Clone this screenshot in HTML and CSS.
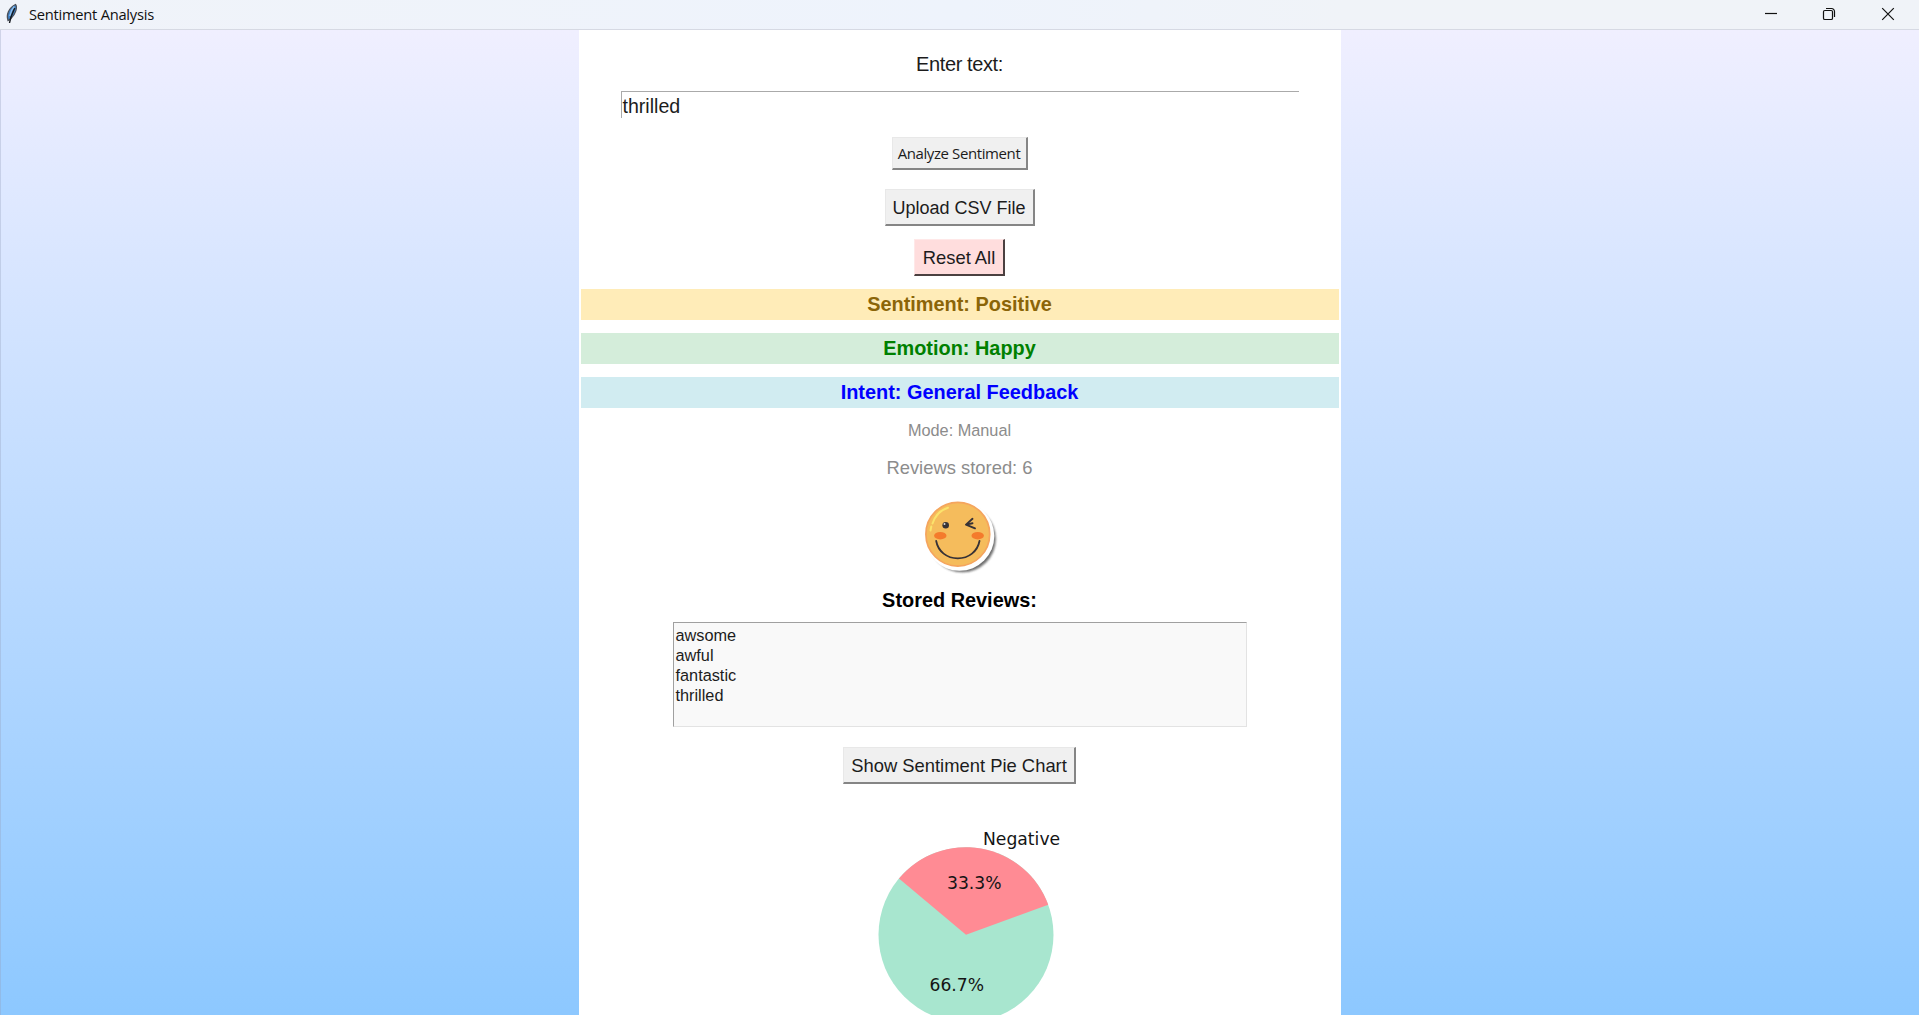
FILE: index.html
```html
<!DOCTYPE html>
<html lang="en">
<head>
<meta charset="utf-8">
<title>Sentiment Analysis</title>
<link rel="stylesheet" href="styles.css">
</head>
<body>
<header class="titlebar">
  <svg class="feather" width="14" height="22" viewBox="0 0 14 22">
    <path d="M3 17.500C1 12 3.500 5 10.500 1.500C12.600 4 11 11 5.500 16Z" fill="#3f7fc4" stroke="#4a4f58" stroke-width="1.200"/>
    <path d="M9.300 3.500C6.500 6.500 5.500 9.500 4.800 13" fill="none" stroke="#8fc0ee" stroke-width="1.500"/>
    <path d="M9.800 5C8 9 5.500 13 4.500 20" fill="none" stroke="#15191e" stroke-width="1.400"/>
  </svg>
  <h1 class="title">Sentiment Analysis</h1>
  <div class="controls">
    <svg width="14" height="14" viewBox="0 0 14 14"><path d="M2 6.500H14"/></svg>
    <svg width="14" height="14" viewBox="0 0 14 14"><rect x="1.500" y="3.500" width="9" height="9" rx="1.300"/><path d="M4 1.500H9.500A3 3 0 0 1 12.500 4.500V10"/></svg>
    <svg width="14" height="14" viewBox="0 0 14 14"><path d="M1.200 1.200L12.800 12.800M12.800 1.200L1.200 12.800"/></svg>
  </div>
</header>
<main class="canvas">
  <section class="panel">
    <label class="prompt" for="entry">Enter text:</label>
    <div class="entry" id="entry">thrilled</div>
    <button class="btn analyze"><span>Analyze Sentiment</span></button>
    <button class="btn upload"><span>Upload CSV File</span></button>
    <button class="btn reset"><span>Reset All</span></button>
    <div class="band sentiment">Sentiment: Positive</div>
    <div class="band emotion">Emotion: Happy</div>
    <div class="band intent">Intent: General Feedback</div>
    <p class="mode">Mode: Manual</p>
    <p class="count">Reviews stored: 6</p>
    <svg class="emoji" width="80" height="80" viewBox="0 0 80 80">
      <defs>
        <filter id="soft" x="-20%" y="-20%" width="140%" height="140%"><feGaussianBlur stdDeviation="1.200"/></filter>
      </defs>
      <circle cx="42.500" cy="43" r="33.300" fill="#555" opacity=".85" filter="url(#soft)"/>
      <circle cx="39.500" cy="40" r="34.800" fill="#fff"/>
      <circle cx="37.800" cy="38.200" r="31.900" fill="#f5bc5c" stroke="#f5a55e" stroke-width="1.700"/>
      <path d="M10.500 34.500L11.300 30.500M12.500 27.500C15 20 20.500 14 28 11.700" fill="none" stroke="#fbe36c" stroke-width="2" stroke-linecap="round"/>
      <circle cx="25.700" cy="29.300" r="3.300" fill="#373236"/>
      <circle cx="24.500" cy="27.900" r="1" fill="#ddd"/>
      <path d="M52.500 22.800L46 28.600L55 32.300M46 28.600L52.500 27.300" fill="none" stroke="#373236" stroke-width="1.900" stroke-linecap="round" stroke-linejoin="round"/>
      <ellipse cx="20.300" cy="39.700" rx="6.200" ry="3.700" fill="#f47b2c"/>
      <ellipse cx="57.700" cy="39.700" rx="6.200" ry="3.700" fill="#f47b2c"/>
      <path d="M16.200 45C18 55.500 27 62.300 37.800 62.300S57.600 55.500 59.500 45" fill="none" stroke="#373236" stroke-width="1.800" stroke-linecap="round"/>
    </svg>
    <h2 class="stored">Stored Reviews:</h2>
    <ul class="list">
      <li>awsome</li>
      <li>awful</li>
      <li>fantastic</li>
      <li>thrilled</li>
    </ul>
    <button class="btn chart"><span>Show Sentiment Pie Chart</span></button>
    <svg class="pie" width="240" height="195" viewBox="0 0 240 195">
      <circle cx="116" cy="114.700" r="87.500" fill="#a8e6cf"/>
      <path d="M116 114.700L198.220 84.770A87.500 87.500 0 0 0 48.970 58.460Z" fill="#ff8b94"/>
      <text x="133" y="25">Negative</text>
      <text x="97" y="69">33.3%</text>
      <text x="79.500" y="171">66.7%</text>
    </svg>
  </section>
</main>
</body>
</html>
```
FILE: styles.css
```css
* {
  box-sizing: border-box;
}

body {
  margin: 0;
  height: 1015px;
  overflow: hidden;
  display: flex;
  flex-direction: column;
  font-family: "Liberation Sans", Arial, sans-serif;
  color: #1c1c1c;
}

.titlebar {
  flex: none;
  height: 30px;
  display: flex;
  align-items: center;
  padding: 0 24px 1px 5px;
  background: linear-gradient(90deg, #f0f3f9, #eef3fc 50%, #f0f3f8 70%, #f0f3f8);
  border-bottom: 1px solid #d6d9e3;
}

.title {
  margin: 0 auto 0 10px;
  font: 400 14.700px/28px "Open Sans", "Noto Sans", sans-serif;
  letter-spacing: -0.250px;
  color: #111;
}

.controls {
  display: flex;
  gap: 45px;
}

.controls svg {
  fill: none;
  stroke: #111;
  stroke-width: 1.200;
}

.canvas {
  flex: 1;
  min-height: 0;
  display: flex;
  justify-content: center;
  border-left: 1px solid rgba(150, 160, 190, 0.350);
  background: linear-gradient(#f0efff, #8dc8ff);
}

.panel {
  width: 762px;
  padding-right: 1px;
  display: flex;
  flex-direction: column;
  align-items: center;
  overflow: hidden;
  background: #fff;
}

.prompt {
  margin-top: 22px;
  font-size: 20px;
  line-height: 24px;
  letter-spacing: -0.400px;
}

.entry {
  width: 678px;
  height: 27px;
  margin-top: 15px;
  padding-left: 1px;
  border-top: 1px solid #aaa;
  border-left: 1px solid #aaa;
  font-size: 19.600px;
  line-height: 28px;
}

.btn {
  flex: none;
  display: flex;
  align-items: center;
  justify-content: center;
  height: 37px;
  padding: 2px 0 0;
  border: solid;
  border-width: 1px 2px 2px 1px;
  border-color: #e8e8e8 #858585 #858585 #e8e8e8;
  background: #f0f0f0;
  color: #1c1c1c;
  font: 18.400px/22px "Liberation Sans", Arial, sans-serif;
  white-space: nowrap;
}

.analyze {
  width: 136px;
  height: 33px;
  margin-top: 19px;
  padding-top: 0;
  font: 15px/20px "Open Sans", "Noto Sans", sans-serif;
  letter-spacing: -0.400px;
}

.upload {
  width: 150px;
  margin-top: 19px;
  font-size: 18px;
}

.reset {
  width: 91px;
  margin-top: 13px;
  background: #ffdddd;
  border-color: #ffe8e8 #4b4040 #4b4040 #ffe8e8;
}

.band {
  flex: none;
  width: 758px;
  height: 31px;
  margin-top: 13px;
  text-align: center;
  font-size: 19.900px;
  font-weight: 700;
  line-height: 31px;
}

.sentiment {
  background: #ffecb8;
  color: #8b6508;
}

.emotion {
  background: #d4edda;
  color: #008000;
}

.intent {
  background: #d1ecf1;
  color: #0000ff;
}

.mode {
  margin: 12px 0 0;
  font-size: 16.300px;
  line-height: 20px;
  color: #8c8c8c;
}

.count {
  margin: 17px 0 0;
  font-size: 18.400px;
  line-height: 22px;
  color: #8c8c8c;
}

.emoji {
  flex: none;
  margin-top: 17px;
}

.stored {
  margin: 12px 0 0;
  font-size: 19.900px;
  line-height: 24px;
  color: #000;
}

.list {
  flex: none;
  width: 574px;
  height: 105px;
  margin: 10px 0 0;
  padding: 2px;
  list-style: none;
  border: 1px solid #e3e3e3;
  border-top-color: #a0a0a0;
  border-left-color: #a0a0a0;
  background: #f9f9f9;
  font-size: 16.300px;
  line-height: 20px;
}

.chart {
  width: 233px;
  margin-top: 20px;
}

.pie {
  flex: none;
  margin: 36px 0 0 21px;
  font-family: "DejaVu Sans", sans-serif;
  font-size: 17.200px;
  fill: #141414;
}
```
